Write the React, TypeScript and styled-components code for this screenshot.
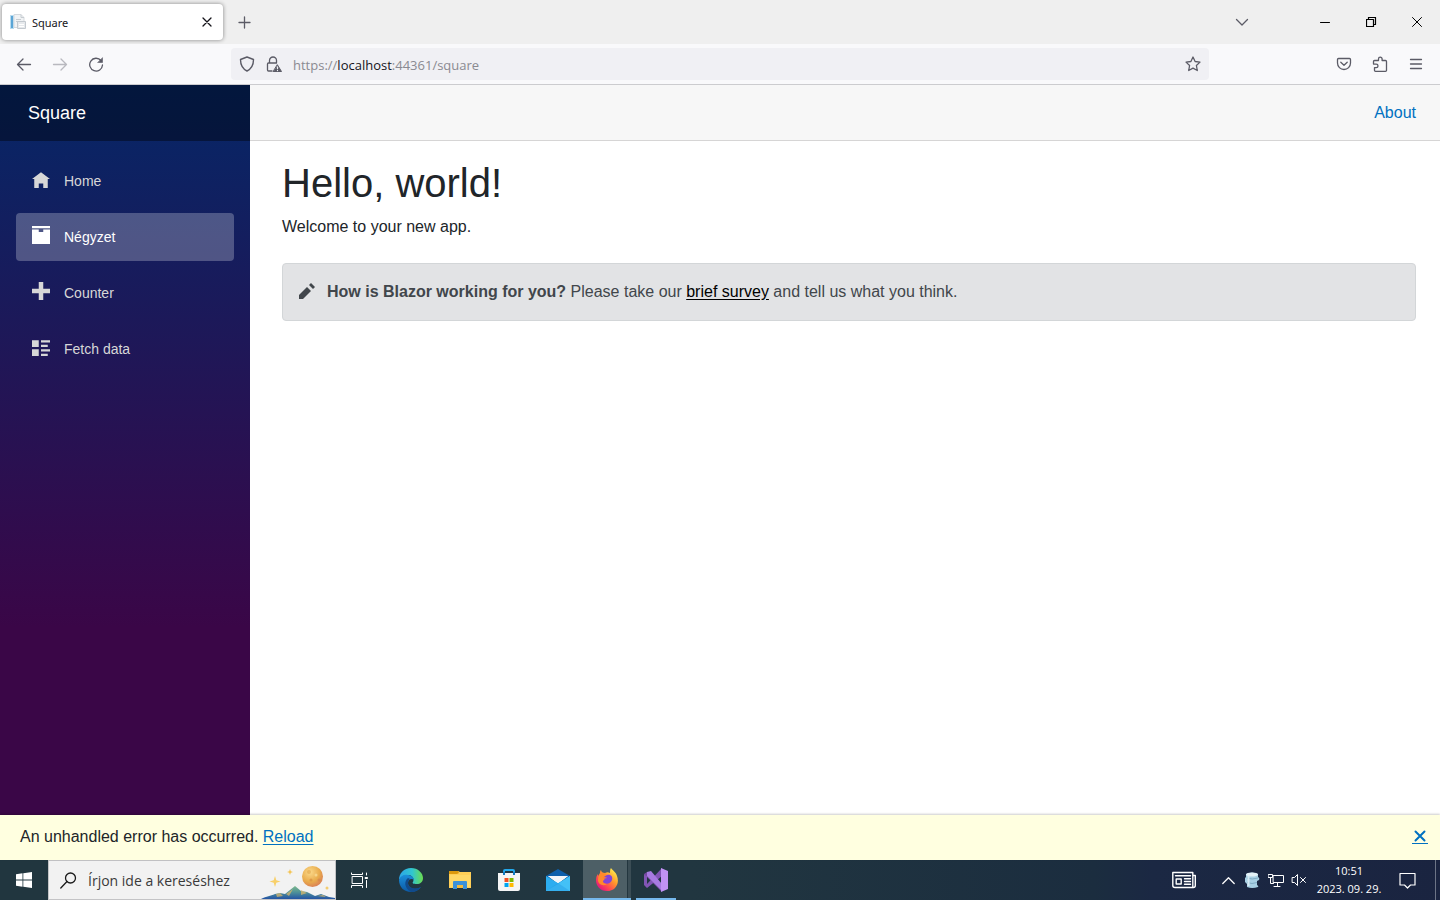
import React from "react";
import styled, { createGlobalStyle } from "styled-components";

const GlobalStyle = createGlobalStyle`
  *, *::before, *::after { box-sizing: border-box; }
  body { margin: 0; background: #fff; font-family: "Liberation Sans", Arial, sans-serif; }
  button { border: 0; padding: 0; background: none; color: inherit; font: inherit; cursor: pointer; }
  svg { display: block; flex: none; }
`;

const uiFont = `"Noto Sans", "Open Sans", sans-serif`;

const Screen = styled.div`
  display: flex;
  flex-direction: column;
  min-height: 100vh;
`;

/* Browser chrome */
const TabStrip = styled.header`
  display: flex;
  align-items: center;
  height: 44px;
  padding-left: 2px;
  background: #efefef;
  color: #5b5b66;
`;
const Tab = styled.div`
  display: flex;
  align-items: center;
  gap: 6px;
  width: 221px;
  height: 36px;
  padding: 0 6px 0 8px;
  border-radius: 4px;
  background: #fff;
  box-shadow: 0 0 4px rgba(0, 0, 0, 0.45);
  color: #15141a;
  font: 11px/16px ${uiFont};
`;
const TabTitle = styled.span`
  flex: 1;
  padding-top: 1px;
`;
const IconButton = styled.button<{ $w?: number; $h?: number }>`
  display: flex;
  flex: none;
  align-items: center;
  justify-content: center;
  width: ${(p) => p.$w ?? 36}px;
  height: ${(p) => p.$h ?? 32}px;
`;
const WindowControls = styled.div`
  display: flex;
  margin-left: auto;
  color: #000;
`;
const TabsMenu = styled.div`
  margin-right: 42px;
  color: #5b5b66;
`;
const Toolbar = styled.nav`
  display: flex;
  align-items: center;
  height: 41px;
  border-bottom: 1px solid #cccccf;
  background: #f9f9fb;
  color: #5b5b66;
`;
const ToolbarSide = styled.div<{ $end?: boolean }>`
  display: flex;
  flex: none;
  justify-content: ${(p) => (p.$end ? "flex-end" : "flex-start")};
  width: 231px;
  padding: 0 6px;
`;
const UrlBar = styled.div`
  display: flex;
  flex: 1;
  align-items: center;
  height: 32px;
  padding: 0 2px;
  border-radius: 4px;
  background: #f0f0f4;
`;
const Url = styled.div`
  flex: 1;
  padding: 2px 0 0 6px;
  color: #8a8a91;
  font: 13px/20px "Open Sans", sans-serif;
  b { color: #15141a; font-weight: 400; }
`;

/* Web page */
const Page = styled.div`
  position: relative;
  display: flex;
  flex: 1;
  color: #212529;
  font-size: 16px;
  line-height: 24px;
`;
const Sidebar = styled.aside`
  flex: none;
  width: 250px;
  background: linear-gradient(180deg, rgb(5, 39, 103) 0%, #3a0647 70%);
`;
const Brand = styled.div`
  display: flex;
  align-items: center;
  height: 56px;
  padding: 0 28px;
  background: rgba(0, 0, 0, 0.4);
  a { color: #fff; font-size: 18px; text-decoration: none; }
`;
const NavList = styled.nav`
  display: flex;
  flex-direction: column;
  gap: 8px;
  padding: 16px;
`;
const NavItem = styled.a<{ $active?: boolean }>`
  display: flex;
  align-items: center;
  gap: 14px;
  height: 48px;
  padding: 0 16px;
  border-radius: 4px;
  background: ${(p) => (p.$active ? "rgba(255, 255, 255, 0.25)" : "transparent")};
  color: ${(p) => (p.$active ? "#fff" : "#d7d7d7")};
  font-size: 14px;
  text-decoration: none;
  svg { margin-bottom: 4px; }
`;
const Main = styled.main`
  flex: 1;
  min-width: 0;
`;
const TopRow = styled.div`
  display: flex;
  align-items: center;
  justify-content: flex-end;
  height: 56px;
  padding: 0 24px;
  border-bottom: 1px solid #d6d5d5;
  background: #f7f7f7;
`;
const Content = styled.article`
  padding: 18px 24px 64px 32px;
`;
const Title = styled.h1`
  margin: 0 0 8px;
  font-size: 40px;
  font-weight: 400;
  line-height: 48px;
`;
const Lead = styled.p`
  margin: 0 0 24px;
`;
const Alert = styled.div`
  display: flex;
  align-items: center;
  gap: 12px;
  padding: 16px;
  border: 1px solid #d3d6d8;
  border-radius: 4px;
  background: #e2e3e5;
  color: #41464b;
  svg { margin-bottom: 2px; }
  a { color: #000; text-underline-offset: 2px; }
`;
const PageLink = styled.a<{ $underline?: boolean }>`
  color: #0071c1;
  text-decoration: ${(p) => (p.$underline ? "underline" : "none")};
  text-underline-offset: 2px;
`;
const ErrorBar = styled.div`
  position: absolute;
  right: 0;
  bottom: 0;
  left: 0;
  display: flex;
  align-items: center;
  justify-content: space-between;
  height: 45px;
  padding: 0 12px 2px 20px;
  background: #ffffe0;
  box-shadow: 0 -1px 2px rgba(0, 0, 0, 0.2);
`;
const Dismiss = styled.button`
  display: flex;
  justify-content: center;
  width: 16px;
  padding-bottom: 1px;
  border-bottom: 1px solid #0071c1;
  color: #0071c1;
`;

/* Taskbar */
const Taskbar = styled.footer`
  display: flex;
  align-items: stretch;
  height: 40px;
  background: linear-gradient(90deg, #21363f 0%, #213640 48%, #1b2d3f 76%, #1b2843 80%, #1a2440 100%);
  color: #fff;
  font-family: ${uiFont};
`;
const Search = styled.label`
  display: flex;
  align-items: center;
  width: 288px;
  padding-left: 11px;
  border: 1px solid #c4c4c6;
  background: #f2f2f2;
  color: #1b1b1b;
  input {
    flex: 1;
    min-width: 0;
    padding: 2px 0 0 11px;
    border: 0;
    outline: 0;
    background: none;
    font: 14px/20px "Open Sans", sans-serif;
  }
  input::placeholder { color: #3a3a3a; opacity: 1; }
`;
const Apps = styled.div`
  display: flex;
  gap: 1px;
  margin-left: 3px;
`;
const AppButton = styled.button<{ $state?: "focused" | "open" }>`
  display: flex;
  align-items: center;
  justify-content: center;
  width: 48px;
  background: ${(p) =>
    p.$state === "focused"
      ? "linear-gradient(90deg, #4d5f66 44px, #23363f 44px, #23363f 45px, #3b4d55 45px)"
      : "none"};
  position: relative;
  &::after {
    content: "";
    position: absolute;
    right: ${(p) => (p.$state === "open" ? 4 : 0)}px;
    bottom: 0;
    left: ${(p) => (p.$state === "open" ? 4 : 0)}px;
    height: ${(p) => (p.$state ? 2 : 0)}px;
    background: #76b9ed;
  }
`;
const Tray = styled.div`
  display: flex;
  align-items: center;
  margin-left: auto;
`;
const Clock = styled.time`
  font: 11px/18px "Open Sans", sans-serif;
  text-align: center;
  white-space: nowrap;
`;
const ShowDesktop = styled.button`
  align-self: stretch;
  width: 5px;
  margin-left: 9px;
  border-left: 1px solid #6c7486;
`;

type StrokeProps = { size?: number; width?: number; opacity?: number; children: React.ReactNode };
const Line = ({ size = 16, width = 1, opacity = 1, children }: StrokeProps) => (
  <svg width={size} height={size} viewBox={`0 0 ${size} ${size}`} fill="none" stroke="currentColor"
    strokeWidth={width} opacity={opacity} strokeLinecap="round" strokeLinejoin="round" aria-hidden="true">
    {children}
  </svg>
);
const Glyph = ({ d, size = 18 }: { d: string; size?: number }) => (
  <svg width={size} height={size} viewBox="0 0 8 8" fill="currentColor" aria-hidden="true"><path d={d} /></svg>
);

const navItems = [
  { label: "Home", d: "M4 1l-4 3h1v4h2v-2h2v2h2v-4h1z" },
  { label: "Négyzet", d: "M0 0h8v1h-8z M0 1.5h3v1.200h2v-1.200h3v6.5h-8z", active: true },
  { label: "Counter", d: "M3 0v3h-3v2h3v3h2v-3h3v-2h-3v-3z" },
  { label: "Fetch data", d: "M0 1v3h3v-3zM4 1v1h4v-1zM4 3v1h3v-1zM0 5v3h3v-3zM4 5v1h4v-1zM4 7v1h3v-1z" },
];

const Favicon = () => (
  <svg width="16" height="16" viewBox="0 0 16 16" aria-hidden="true">
    <path d="M0 1h4v14H0z" fill="#b9dcf0" /><path d="M1 2h2v12H1z" fill="#5aa5d6" />
    <path d="M4 .5h7l3 3v10H4z" fill="#f1f3f5" stroke="#d5d9dd" />
    <path d="M11 .5v3h3M6 5.500h5M6 7.500h3" fill="none" stroke="#c6ccd1" />
    <path d="M7.500 7.500h8v7h-8z" fill="#e6e9ec" stroke="#c3c9cf" /><path d="M9 10.500h5M9 12.500h5" stroke="#fff" />
  </svg>
);
const SearchArt = () => (
  <svg width="76" height="38" viewBox="0 0 76 38" aria-hidden="true">
    <defs>
      <radialGradient id="moon" cx=".38" cy=".3" r=".75"><stop offset="0" stopColor="#fbd98a" /><stop offset=".6" stopColor="#e9ac4d" /><stop offset="1" stopColor="#d97c55" /></radialGradient>
      <linearGradient id="hill" x1="0" y1="0" x2="0" y2="1"><stop offset="0" stopColor="#7dba8d" /><stop offset=".5" stopColor="#4d8f99" /><stop offset="1" stopColor="#2454a4" /></linearGradient>
    </defs>
    <path d="M16 15l1.300 4.200 4.200 1.300-4.200 1.300L16 26l-1.300-4.200-4.200-1.300 4.200-1.300z" fill="#f8d06a" />
    <path d="M31 8l.8 2.200 2.200.8-2.200.8L31 14l-.8-2.200L28 11l2.200-.8z" fill="#f4c24e" />
    <circle cx="53.500" cy="15.500" r="10.500" fill="url(#moon)" />
    <circle cx="50" cy="11" r="2" fill="#dfa54b" opacity=".6" /><circle cx="57" cy="14" r="1.500" fill="#f7d58b" /><circle cx="52" cy="19" r="1.500" fill="#d98f42" opacity=".7" /><circle cx="60" cy="19" r="1.500" fill="#cf8047" opacity=".5" />
    <path d="M2 38c6-3 9-3 14-5l5-1 5 1 5-4 5-4 6 5 6 1 8 4 6-2 8 3 6 1v1z" fill="url(#hill)" />
    <path d="M17 33l4-1 3 3-6 1zM27 33l7-5-4 7zM42 29l6 3-6 2zM58 35l6-1 3 2z" fill="#d8b76c" opacity=".75" />
    <circle cx="68" cy="27" r="1.500" fill="#f3cd72" />
  </svg>
);
const EdgeIcon = () => (
  <svg width="24" height="24" viewBox="0 0 24 24" aria-hidden="true">
    <defs>
      <linearGradient id="edgeTop"><stop offset="0" stopColor="#2ba5e8" /><stop offset=".55" stopColor="#31c6d0" /><stop offset="1" stopColor="#6bdd4f" /></linearGradient>
      <linearGradient id="edgeLow" x1="0" y1="0" x2="0" y2="1"><stop offset="0" stopColor="#1b8fdb" /><stop offset="1" stopColor="#0c59a4" /></linearGradient>
    </defs>
    <path d="M0 12C0 5 5 0 12 0s12 5 12 10c0 4-3 6-6 6-4 0-5-1-4-2 1-2 1-6-4-7-5 0-9 3-10 5z" fill="url(#edgeTop)" />
    <path d="M0 12c1-4 5-6 9-5 4 .5 6 3 6 5-2-2-6-1-6 3 0 5 7 8 13 4-2 3-6 5-10 5C5 24 0 19 0 12z" fill="url(#edgeLow)" />
    <path d="M9 10c-4 3-4 10 3 14 4 0 8-2 10-5-6 3-13 1-13-4 0-2 1-3 2-4z" fill="#114a8b" />
  </svg>
);
const FolderIcon = () => (
  <svg width="22" height="20" viewBox="0 0 22 20" aria-hidden="true">
    <path d="M0 1h9l2 1h11v16H0z" fill="#ffcf57" /><path d="M0 1h9l1 2-2 1H0z" fill="#dc990d" />
    <path d="M1 5h20v12H1z" fill="#ffd867" /><path d="M4 12q0-1 1-1h12q1 0 1 1v7h-4v-4H8v4H4z" fill="#3b91d8" /><path d="M8 15h6v3H8z" fill="#f3bb3d" />
  </svg>
);
const StoreIcon = () => (
  <svg width="24" height="24" viewBox="0 0 24 24" aria-hidden="true">
    <path d="M7 6V3q0-1 1-1h8q1 0 1 1v3" fill="none" stroke="#23a9ec" strokeWidth="2" />
    <path d="M1 5h22v16q0 2-2 2H3q-2 0-2-2z" fill="#f5f5f5" /><path d="M6 4h2v3H6zM16 4h2v3h-2z" fill="#137bc3" />
    <path d="M7.500 10h4v4h-4z" fill="#f25022" /><path d="M12.500 10h4v4h-4z" fill="#7fba00" /><path d="M7.500 15h4v4h-4z" fill="#00a4ef" /><path d="M12.500 15h4v4h-4z" fill="#ffb900" />
  </svg>
);
const MailIcon = () => (
  <svg width="24" height="24" viewBox="0 0 24 24" aria-hidden="true">
    <path d="M0 8l12-7 12 7v3H0z" fill="#0e5fab" /><path d="M2 8h20l-10 8z" fill="#f2f5f8" />
    <path d="M0 8l12 7 12-7v15H0z" fill="#2cadf0" /><path d="M2 8h20l-10 7z" fill="#f2f5f8" /><path d="M24 8v15H0l12-7z" fill="#43c1f7" /><path d="M0 23l12-8 12 8z" fill="#1e93df" opacity=".35" />
  </svg>
);
const FirefoxIcon = () => (
  <svg width="24" height="24" viewBox="0 0 24 24" aria-hidden="true">
    <defs><linearGradient id="fox" x1=".9" y1=".1" x2=".2" y2=".9"><stop offset="0" stopColor="#fff04f" /><stop offset=".4" stopColor="#ff9a2b" /><stop offset=".75" stopColor="#ff4850" /><stop offset="1" stopColor="#e31b7c" /></linearGradient></defs>
    <path d="M16 0c1 2 5 4 6 8 3 8-2 15-10 15C5 23 1 18 1 12c0-3 1-5 2-6v2l2-3c0-1 0-2 1-3 0 2 2 3 4 3 2-1 3-1 5 0 0-2 0-4 1-5z" fill="url(#fox)" />
    <path d="M8 9l4-2c4-1 6 2 5 5s-5 5-8 3c-2-2-2-3-1-4l4-1c-1-1-2-1-4-1z" fill="#8244d8" />
    <path d="M5 6c2-1 5-1 6 0 1 0 0 2-1 2l-2 2c2 0 2 1 1 2-2 1-1 4 3 4-4 3-9 0-9-4 0-3 1-5 2-6z" fill="#ff8a2b" />
  </svg>
);
const StudioIcon = () => (
  <svg width="24" height="24" viewBox="0 0 24 24" aria-hidden="true">
    <path d="M0 6l3-2 4 3 10 10v6L3 9v8l-3-1z" fill="#74489f" /><path d="M0 17l3 3 15-12V0L3 16V8L0 7z" fill="#8255b5" />
    <path d="M3 4l4-1 11 13v7L3 8z" fill="#a77ae0" /><path d="M17 0l7 3v18l-7 3z" fill="#c192f4" />
  </svg>
);
const StackIcon = () => (
  <svg width="16" height="16" viewBox="0 0 16 16" aria-hidden="true">
    <path d="M2 2q6-3 12 0v3q2 1 1 3l-2 1v4q2 1 1 2-6 2-11 0v-3L1 10V6l1-1z" fill="#a8d0e4" />
    <ellipse cx="8" cy="2.500" rx="6" ry="2" fill="#e4f2f8" /><path d="M3 6q5 2 11 0M3 10.500q5 2 10 0" fill="none" stroke="#7fabc4" /><path d="M4.500 4v10" stroke="#d5eaf4" strokeWidth="2" />
  </svg>
);

export default function App() {
  return (
    <Screen>
      <GlobalStyle />
      <TabStrip>
        <Tab>
          <Favicon />
          <TabTitle>Square</TabTitle>
          <IconButton $w={20} $h={20} aria-label="Close tab"><Line size={10} width={1.3}><path d="M1 1l8 8M9 1l-8 8" /></Line></IconButton>
        </Tab>
        <IconButton $w={42} aria-label="New tab"><Line size={14} width={1.3}><path d="M7.500 2v11M2 7.500h11" /></Line></IconButton>
        <WindowControls>
          <TabsMenu><IconButton aria-label="List all tabs"><Line size={14} width={1.3}><path d="M1.500 4.500L7 10l5.500-5.500" /></Line></IconButton></TabsMenu>
          <IconButton $w={46} aria-label="Minimize"><Line size={11}><path d="M.5 5.500h9" /></Line></IconButton>
          <IconButton $w={46} aria-label="Restore"><Line size={11}><path d="M.5 2.500h7v7h-7zM2.500 2.500v-2h7v7h-2" strokeWidth="1.200" /></Line></IconButton>
          <IconButton $w={46} aria-label="Close"><Line size={11}><path d="M.5.5l9 9M9.500.5l-9 9" /></Line></IconButton>
        </WindowControls>
      </TabStrip>
      <Toolbar aria-label="Browser">
        <ToolbarSide>
          <IconButton aria-label="Back"><Line width={1.3}><path d="M14.500 8.500h-13M7 3L1.500 8.500 7 14" /></Line></IconButton>
          <IconButton aria-label="Forward"><Line width={1.3} opacity={0.4}><path d="M1.500 8.500h13M9 3l5.500 5.500L9 14" /></Line></IconButton>
          <IconButton aria-label="Reload page"><Line width={1.3}><path d="M13 4.500A6.400 6.400 0 1 0 14.500 9" /><path d="M14.500 2v4.500H10z" fill="currentColor" strokeWidth=".6" /></Line></IconButton>
        </ToolbarSide>
        <UrlBar>
          <IconButton $w={28} aria-label="Tracking protection"><Line width={1.4}><path d="M8 1l6.500 2.500c0 5-1.500 9-6.500 11.500C3 12.500 1.500 8.500 1.500 3.500z" /></Line></IconButton>
          <IconButton $w={26} aria-label="Site security">
            <Line width={1.3}>
              <path d="M6 15H2.500q-1 0-1-1V8q0-1 1-1h8M3.500 7V4.500a3.500 3.500 0 0 1 7 0V7" />
              <path d="M11.500 9l4 6.500h-8z" fill="currentColor" strokeWidth="1" /><path d="M11.500 10.800v1.800M11.500 14.400v.2" stroke="#f0f0f4" />
            </Line>
          </IconButton>
          <Url>https://<b>localhost</b>:44361/square</Url>
          <IconButton $w={28} aria-label="Bookmark this page"><Line width={1.3}><path d="M8 1l2.100 4.500 4.900.6-3.600 3.400.9 5L8 12.100l-4.300 2.400.9-5L1 6.100l4.900-.6z" /></Line></IconButton>
        </UrlBar>
        <ToolbarSide $end>
          <IconButton aria-label="Save to Pocket"><Line width={1.3}><path d="M2.500 2.500h11q1 0 1 1V7a6.500 6.500 0 0 1-13 0V3.500q0-1 1-1zM4.800 6.300L8 9.300l3.200-3" /></Line></IconButton>
          <IconButton aria-label="Extensions"><Line width={1.3}><path d="M2.500 4.500h4V3a1.800 1.800 0 0 1 3.600 0v1.500h3.400q1 0 1 1v9q0 .8-1 .8h-10q-1 0-1-.8v-2.800h1.700a1.800 1.800 0 0 0 0-3.600H1.500V5.500q0-1 1-1z" /></Line></IconButton>
          <IconButton aria-label="Application menu"><Line width={1.3}><path d="M2.500 3.500h11M2.500 8h11M2.500 12.500h11" /></Line></IconButton>
        </ToolbarSide>
      </Toolbar>

      <Page>
        <Sidebar>
          <Brand><a href="#home">Square</a></Brand>
          <NavList aria-label="Main">
            {navItems.map((item) => (
              <NavItem key={item.label} href="#page" $active={item.active}><Glyph d={item.d} />{item.label}</NavItem>
            ))}
          </NavList>
        </Sidebar>
        <Main>
          <TopRow><PageLink href="#about">About</PageLink></TopRow>
          <Content>
            <Title>Hello, world!</Title>
            <Lead>Welcome to your new app.</Lead>
            <Alert>
              <Glyph size={16} d="M6 0l-1 1 2 2 1-1-2-2zm-2 2l-4 4v2h2l4-4-2-2z" />
              <span><strong>How is Blazor working for you?</strong> Please take our <a href="#survey">brief survey</a> and tell us what you think.</span>
            </Alert>
          </Content>
        </Main>
        <ErrorBar role="alert">
          <span>An unhandled error has occurred. <PageLink $underline href="#reload">Reload</PageLink></span>
          <Dismiss aria-label="Dismiss"><Line size={12} width={2}><path d="M1.500 1.500l9 9M10.500 1.500l-9 9" /></Line></Dismiss>
        </ErrorBar>
      </Page>

      <Taskbar>
        <IconButton $w={48} $h={40} aria-label="Start">
          <svg width="16" height="16" viewBox="0 0 16 16" fill="#fff" aria-hidden="true"><path d="M0 2.200l6.500-.9v6.300H0zM7.300 1.200L16 0v7.600H7.300zM0 8.400h6.500v6.300L0 13.800zM7.300 8.400H16V16l-8.700-1.200z" /></svg>
        </IconButton>
        <Search>
          <Line size={17} width={1.3}><circle cx="10.500" cy="6" r="5" /><path d="M7 9.500L.8 16" /></Line>
          <input type="search" aria-label="Keresés" placeholder="Írjon ide a kereséshez" />
          <SearchArt />
        </Search>
        <IconButton $w={48} $h={40} aria-label="Task view">
          <Line size={18}><path d="M1.500 5.500h10v7h-10zM.5 2v1.500h11V2M.5 16.500v-2h11v2M15.500 2v2M15.500 9.500v7" /><path d="M14.500 6.500h2v1h-2z" fill="currentColor" /></Line>
        </IconButton>
        <Apps>
          <AppButton aria-label="Edge"><EdgeIcon /></AppButton>
          <AppButton aria-label="File Explorer"><FolderIcon /></AppButton>
          <AppButton aria-label="Store"><StoreIcon /></AppButton>
          <AppButton aria-label="Mail"><MailIcon /></AppButton>
          <AppButton aria-label="Firefox" $state="focused"><FirefoxIcon /></AppButton>
          <AppButton aria-label="Visual Studio" $state="open"><StudioIcon /></AppButton>
        </Apps>
        <Tray>
          <IconButton $w={64} $h={40} aria-label="News">
            <Line size={24} width={1.4}><path d="M.8 4.500h20v15H3q-2.200 0-2.200-2zM20.800 7.500h2.500v10q0 2-2 2h-2M3.500 7.800h15M12.500 10.800h6M12.500 13.500h6M12.500 16.300h6" /><path d="M4.200 11h5v5h-5z" /></Line>
          </IconButton>
          <IconButton $w={24} $h={40} aria-label="Hidden icons"><Line size={13} width={1.3}><path d="M.8 9.500l5.700-5.700 5.700 5.700" /></Line></IconButton>
          <IconButton $w={24} $h={40} aria-label="Database"><StackIcon /></IconButton>
          <IconButton $w={24} $h={40} aria-label="Network"><Line><path d="M5.500 3.500h10v7h-10zM6 14.500h6M9.500 11v3M.5 2.500h4v3h-4zM2.500 6v5.500h3" /></Line></IconButton>
          <IconButton $w={22} $h={40} aria-label="Volume muted"><Line><path d="M1.500 5.500h2l3-3v11l-3-3h-2zM9.500 5.500l5 5M14.500 5.500l-5 5" /></Line></IconButton>
          <IconButton $w={78} $h={40}><Clock>10:51<br />2023. 09. 29.</Clock></IconButton>
          <IconButton $w={38} $h={40} aria-label="Notifications"><Line size={17} width={1.2}><path d="M1 1.500h15v11.500h-4.500L8.500 16l-3-3H1z" /></Line></IconButton>
          <ShowDesktop aria-label="Show desktop" />
        </Tray>
      </Taskbar>
    </Screen>
  );
}
